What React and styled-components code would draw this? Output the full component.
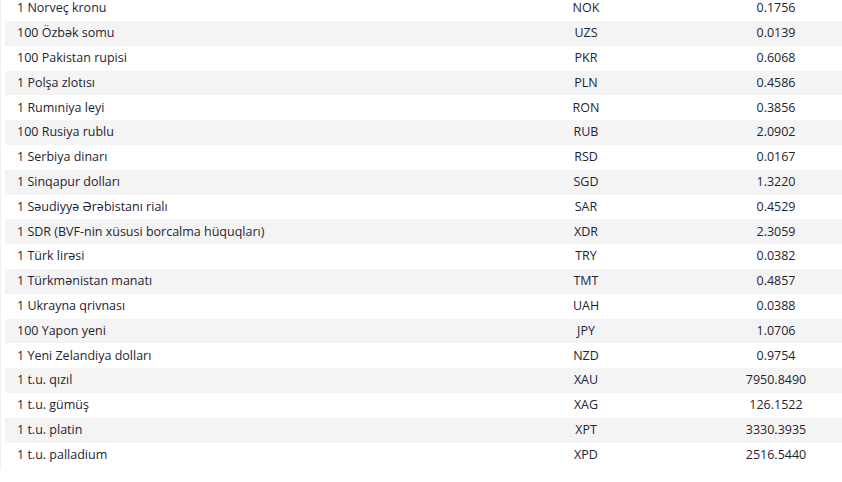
import React from "react";
import styled, { createGlobalStyle } from "styled-components";

const Global = createGlobalStyle`
  html, body { margin: 0; padding: 0; background: #fff; overflow: hidden; }
  body { font-family: "Open Sans", "Noto Sans", Arial, sans-serif; }
`;

const Page = styled.div`
  width: 842px;
  height: 482px;
  overflow: hidden;
  background: #fff;
`;

const Frame = styled.div`
  border-left: 1px solid #f0f0f0;
  padding-left: 4px;
  padding-bottom: 3px;
  margin-top: -3.8px;
`;

const Table = styled.div`
  display: grid;
  grid-template-columns: 457px 248px 132px;
`;

const Row = styled.div`
  display: contents;
  & > div {
    background: ${(p) => (p.$shaded ? "#f4f4f4" : "#fff")};
  }
`;

const Cell = styled.div`
  height: 24.8px;
  box-sizing: border-box;
  padding-bottom: 1.5px;
  display: flex;
  align-items: center;
  justify-content: ${(p) => (p.$align === "left" ? "flex-start" : "center")};
  padding-left: ${(p) => (p.$align === "left" ? "12px" : "0")};
  font-size: 12.5px;
  color: #1f2433;
  white-space: nowrap;
`;

const rows = [
  ["1 Norveç kronu", "NOK", "0.1756"],
  ["100 Özbək somu", "UZS", "0.0139"],
  ["100 Pakistan rupisi", "PKR", "0.6068"],
  ["1 Polşa zlotısı", "PLN", "0.4586"],
  ["1 Rumıniya leyi", "RON", "0.3856"],
  ["100 Rusiya rublu", "RUB", "2.0902"],
  ["1 Serbiya dinarı", "RSD", "0.0167"],
  ["1 Sinqapur dolları", "SGD", "1.3220"],
  ["1 Səudiyyə Ərəbistanı rialı", "SAR", "0.4529"],
  ["1 SDR (BVF-nin xüsusi borcalma hüquqları)", "XDR", "2.3059"],
  ["1 Türk lirəsi", "TRY", "0.0382"],
  ["1 Türkmənistan manatı", "TMT", "0.4857"],
  ["1 Ukrayna qrivnası", "UAH", "0.0388"],
  ["100 Yapon yeni", "JPY", "1.0706"],
  ["1 Yeni Zelandiya dolları", "NZD", "0.9754"],
  ["1 t.u. qızıl", "XAU", "7950.8490"],
  ["1 t.u. gümüş", "XAG", "126.1522"],
  ["1 t.u. platin", "XPT", "3330.3935"],
  ["1 t.u. palladium", "XPD", "2516.5440"],
];

export default function App() {
  return (
    <Page>
      <Global />
      <Frame>
        <Table>
          {rows.map(([name, code, value], i) => (
            <Row key={code} $shaded={i % 2 === 1}>
              <Cell $align="left">{name}</Cell>
              <Cell>{code}</Cell>
              <Cell>{value}</Cell>
            </Row>
          ))}
        </Table>
      </Frame>
    </Page>
  );
}
